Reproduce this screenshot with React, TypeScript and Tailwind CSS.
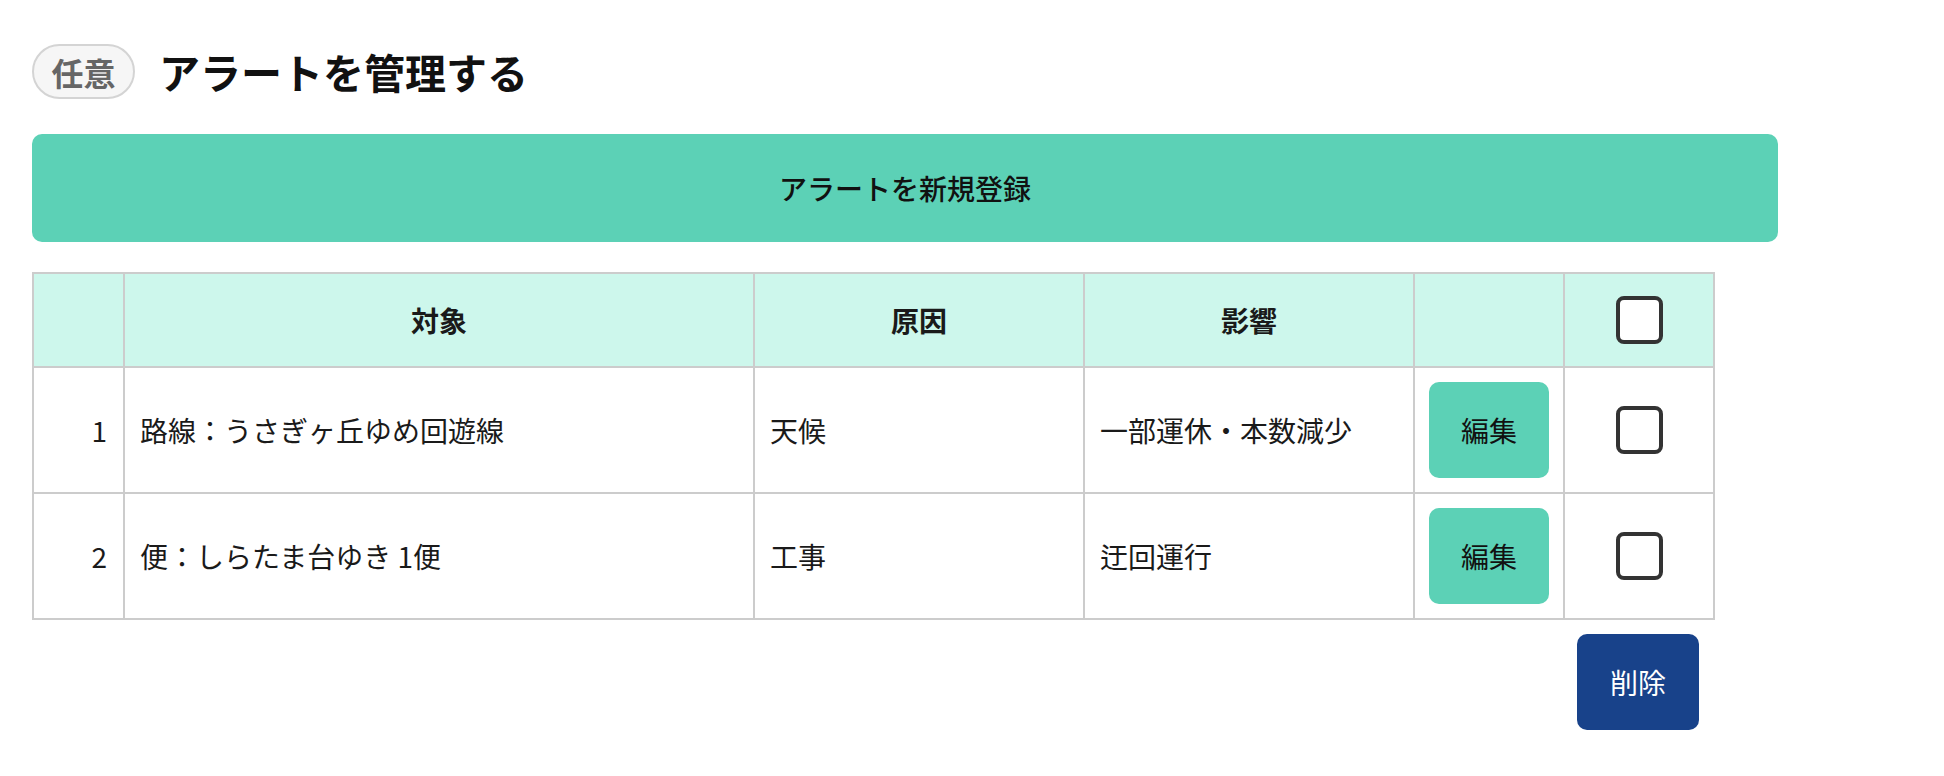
import React from "react";

const font = { fontFamily: '"Noto Sans CJK JP", "Noto Sans", sans-serif' };

function Box() {
  return <div className="mx-auto h-[48px] w-[47px] rounded-[8px] border-[4px] border-[#333333] bg-white" />;
}

const rows = [
  { n: 1, target: "路線：うさぎヶ丘ゆめ回遊線", cause: "天候", effect: "一部運休・本数減少" },
  { n: 2, target: "便：しらたま台ゆき 1便", cause: "工事", effect: "迂回運行" },
];

export default function App() {
  return (
    <div className="min-h-[776px] w-[1944px] bg-white pl-[32px] pt-[44px] text-[#1a1a1a]" style={font}>
      <div className="flex items-center gap-[24px]">
        <span className="flex h-[55px] w-[103px] items-center justify-center rounded-full border-2 border-[#d4d4d4] bg-[#f6f6f6] text-[32px] font-bold leading-none text-[#666666]">
          任意
        </span>
        <h1 className="text-[41px] font-bold leading-none text-[#111111]">アラートを管理する</h1>
      </div>

      <button className="mt-[35px] flex h-[108px] w-[1746px] items-center justify-center rounded-[10px] bg-[#5cd1b6] text-[28px] font-medium text-[#111111]">
        アラートを新規登録
      </button>

      <div className="mt-[30px] w-[1681px]">
        <table className="w-[1681px] table-fixed border-collapse border-2 border-[#cccccc] text-[28px]">
          <colgroup>
            <col className="w-[91px]" />
            <col className="w-[630px]" />
            <col className="w-[330px]" />
            <col className="w-[330px]" />
            <col className="w-[150px]" />
            <col className="w-[150px]" />
          </colgroup>
          <thead>
            <tr className="h-[94px] bg-[#cdf7ec]">
              <th className="border-2 border-[#cccccc]" />
              <th className="border-2 border-[#cccccc] font-bold">対象</th>
              <th className="border-2 border-[#cccccc] font-bold">原因</th>
              <th className="border-2 border-[#cccccc] font-bold">影響</th>
              <th className="border-2 border-[#cccccc]" />
              <th className="border-2 border-[#cccccc]">
                <Box />
              </th>
            </tr>
          </thead>
          <tbody>
            {rows.map((r) => (
              <tr key={r.n} className="h-[126px]">
                <td className="border-2 border-[#cccccc] pr-[16px] text-right">{r.n}</td>
                <td className="border-2 border-[#cccccc] pl-[15px]">{r.target}</td>
                <td className="border-2 border-[#cccccc] pl-[15px]">{r.cause}</td>
                <td className="border-2 border-[#cccccc] pl-[15px]">{r.effect}</td>
                <td className="border-2 border-[#cccccc] px-[14px]">
                  <button className="flex h-[96px] w-[120px] items-center justify-center rounded-[10px] bg-[#5cd1b6] text-[28px] text-[#111111]">
                    編集
                  </button>
                </td>
                <td className="border-2 border-[#cccccc]">
                  <Box />
                </td>
              </tr>
            ))}
          </tbody>
        </table>
        <div className="mt-[14px] flex justify-end pr-[14px]">
          <button className="flex h-[96px] w-[122px] items-center justify-center rounded-[10px] bg-[#18428a] text-[28px] text-white">
            削除
          </button>
        </div>
      </div>
    </div>
  );
}
